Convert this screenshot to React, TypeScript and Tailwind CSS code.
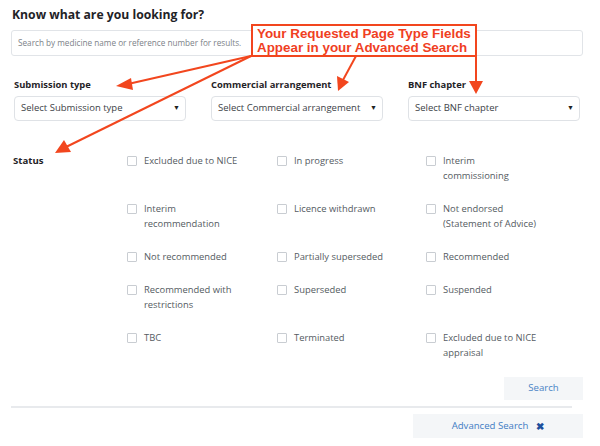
import React from 'react';

const columns: string[][] = [
  ['Excluded due to NICE', 'In progress', 'Interim commissioning'],
  ['Interim recommendation', 'Licence withdrawn', 'Not endorsed (Statement of Advice)'],
  ['Not recommended', 'Partially superseded', 'Recommended'],
  ['Recommended with restrictions', 'Superseded', 'Suspended'],
  ['TBC', 'Terminated', 'Excluded due to NICE appraisal'],
];

const selects = [
  { label: 'Submission type', placeholder: 'Select Submission type' },
  { label: 'Commercial arrangement', placeholder: 'Select Commercial arrangement' },
  { label: 'BNF chapter', placeholder: 'Select BNF chapter' },
];

const CheckItem: React.FC<{ text: string }> = ({ text }) => (
  <label className="flex items-start gap-[7px]">
    <span className="mt-[3px] h-[10px] w-[10px] shrink-0 border border-[#c9cdd2] rounded-[1px] bg-white" />
    <span className="w-[96px] text-[9.4px] leading-[15px] text-[#555b62]">{text}</span>
  </label>
);

const Arrows: React.FC = () => (
  <svg className="pointer-events-none absolute left-0 top-0" width="600" height="446" viewBox="0 0 600 446">
    <g stroke="#f2461e" strokeWidth="2" fill="none">
      <line x1="251" y1="56" x2="128" y2="84" />
      <line x1="251" y1="56" x2="66" y2="147" />
      <line x1="356" y1="56" x2="343" y2="80" />
      <line x1="476" y1="56" x2="476" y2="82" />
    </g>
    <g fill="#f2461e">
      <polygon points="116,86 131,78 133,90" />
      <polygon points="55,153 64,140 71,152" />
      <polygon points="338,91 337,76 349,82" />
      <polygon points="476,94 469,81 483,81" />
    </g>
  </svg>
);

export default function App() {
  return (
    <div className="relative h-[446px] w-[600px] overflow-hidden bg-white font-['Open_Sans',sans-serif]">
      <div className="w-[594px] px-[11px] pt-[6px]">
        <h2 className="ml-[1px] text-[12.2px] font-bold leading-[18px] text-[#1f2327]">
          Know what are you looking for?
        </h2>
        <div className="mt-[6px] flex h-[26px] items-center rounded-[3px] border border-[#e1e4e8] px-[6px] text-[8.2px] text-[#7c8288]">
          Search by medicine name or reference number for results.
        </div>

        <div className="mt-[21px] grid grid-cols-3 gap-x-[25px] pl-[3px] pr-[3px]">
          {selects.map((s) => (
            <div key={s.label}>
              <div className="whitespace-nowrap text-[9.4px] font-bold leading-[16px] text-[#1f2327]">{s.label}</div>
              <div className="mt-[3px] flex h-[25px] items-center justify-between rounded-[4px] border border-[#dfe2e6] pl-[6px] pr-[5px] text-[9.5px] text-[#3d4247]">
                <span className="whitespace-nowrap">{s.placeholder}</span>
                <span className="text-[7px] text-[#222]">▼</span>
              </div>
            </div>
          ))}
        </div>

        <div className="mt-[32px] flex">
          <div className="w-[116px] pl-[2px] text-[9.6px] font-bold leading-[15px] text-[#1f2327]">Status</div>
          <div className="grid flex-1 grid-cols-[150px_149px_1fr] gap-y-[18px]">
            {columns.flat().map((t) => (
              <CheckItem key={t} text={t} />
            ))}
          </div>
        </div>

        <div className="mt-[17px] flex justify-end">
          <button className="h-[23px] w-[79px] bg-[#f4f6f8] text-[9.6px] text-[#4a84c6]">Search</button>
        </div>
        <div className="mr-[11px] mt-[6px] h-[2px] bg-[#e8eaed]" />
        <div className="mt-[6px] flex justify-end">
          <button className="flex h-[24px] w-[170px] items-center justify-center gap-[8px] bg-[#f4f6f8] text-[9.6px] text-[#3f7cc4]">
            <span>Advanced Search</span>
            <span className="text-[10px] font-bold text-[#1e4f9c]">✖</span>
          </button>
        </div>
      </div>

      <Arrows />
      <div className="absolute left-[251px] top-[24px] h-[33px] w-[226px] whitespace-nowrap border-2 border-[#f2461e] bg-white pl-[4px] pt-[1px] font-['Liberation_Sans',Arial,sans-serif] text-[13.4px] font-bold leading-[14px] text-[#f0401f]">
        Your Requested Page Type Fields
        <br />
        Appear in your Advanced Search
      </div>
    </div>
  );
}
